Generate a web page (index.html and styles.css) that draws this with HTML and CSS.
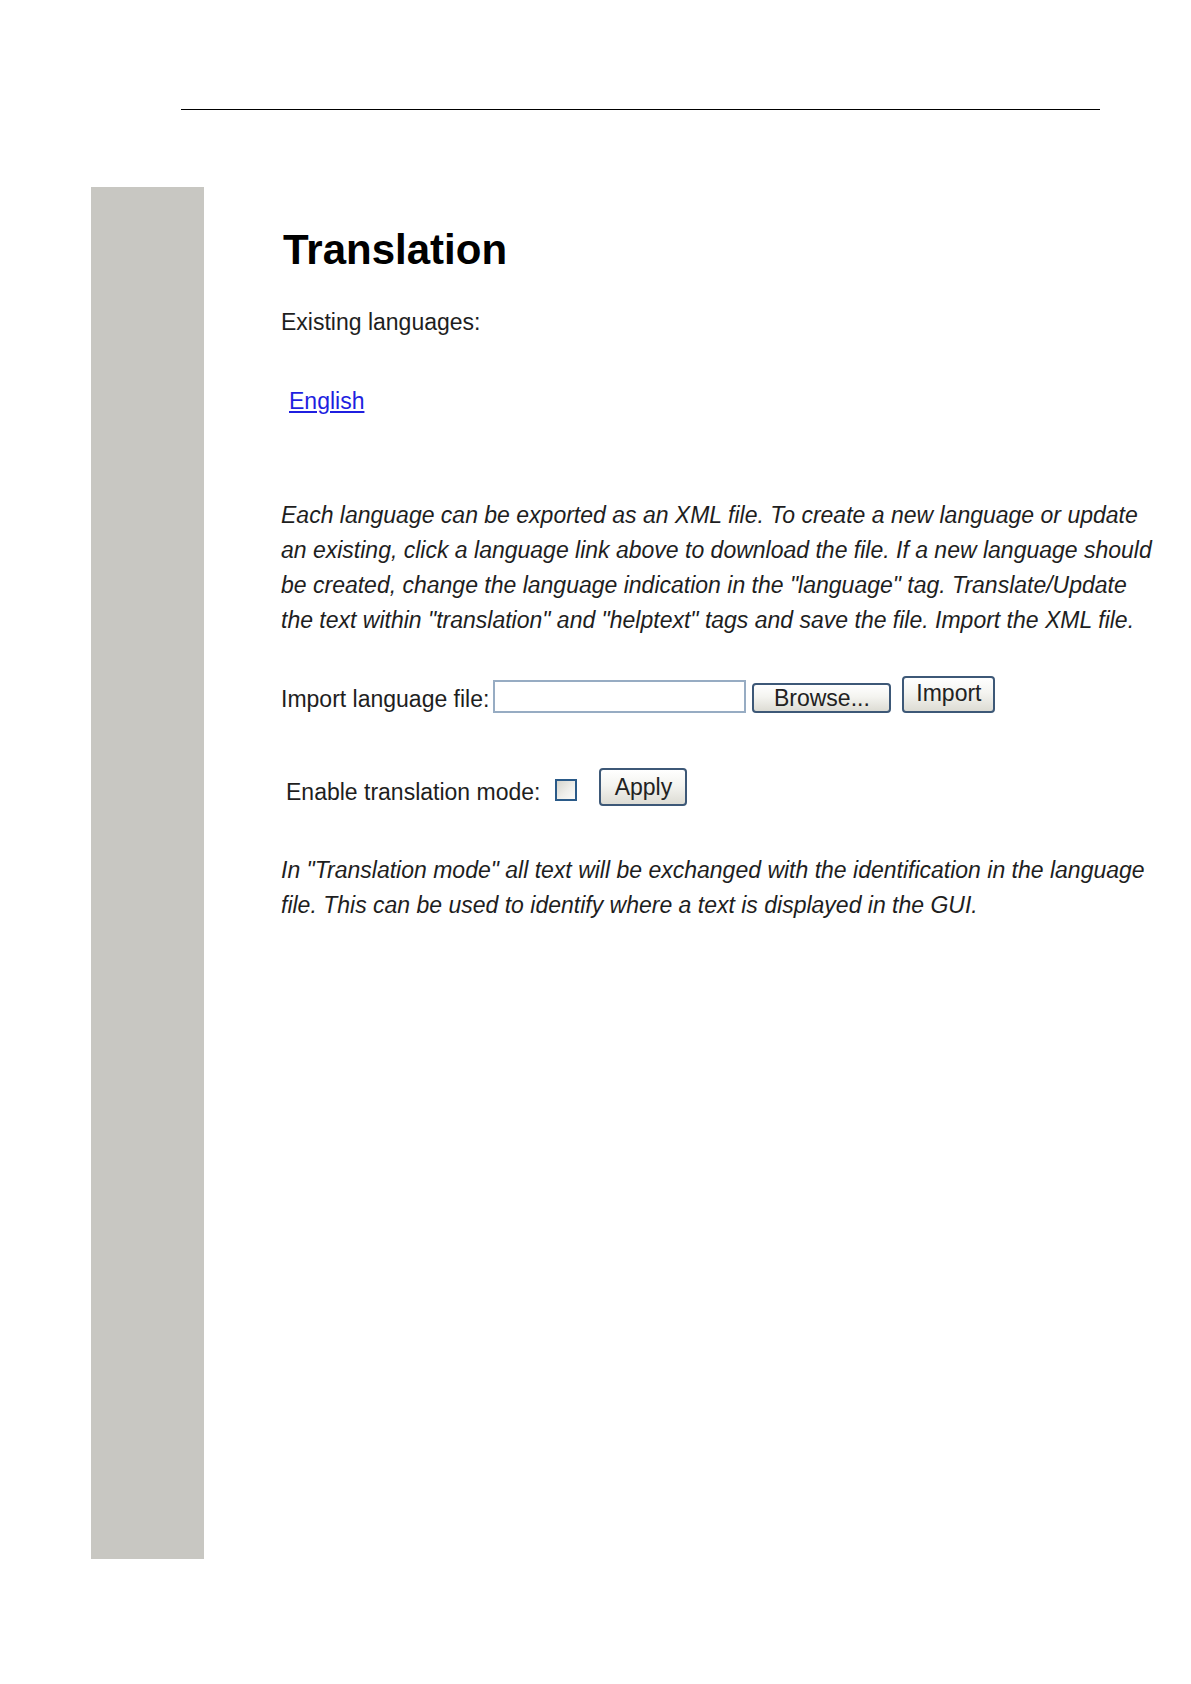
FILE: index.html
```html
<!DOCTYPE html>
<html lang="en">
<head>
<meta charset="utf-8">
<title>Translation</title>
<link rel="stylesheet" href="styles.css">
</head>
<body>
<div class="page">
  <div class="rule"></div>
  <div class="layout">
    <aside class="sidebar"></aside>
    <main class="content">
      <h1 class="title">Translation</h1>
      <p class="existing">Existing languages:</p>
      <a class="lang-link" href="#">English</a>
      <p class="note note-first">Each language can be exported as an XML file. To create a new language or update an existing, click a language link above to download the file. If a new language should be created, change the language indication in the "language" tag. Translate/Update the text within "translation" and "helptext" tags and save the file. Import the XML file.</p>
      <div class="import-row">
        <span class="row-label">Import language file:</span>
        <input class="file-field" type="text" value="">
        <button class="btn btn-browse" type="button">Browse...</button>
        <button class="btn btn-import" type="button">Import</button>
      </div>
      <div class="mode-row">
        <span class="row-label">Enable translation mode:</span>
        <input class="check" type="checkbox">
        <button class="btn btn-apply" type="button">Apply</button>
      </div>
      <p class="note note-second">In "Translation mode" all text will be exchanged with the identification in the language file. This can be used to identify where a text is displayed in the GUI.</p>
    </main>
  </div>
</div>
</body>
</html>
```
FILE: styles.css
```css
html, body {
  margin: 0;
  padding: 0;
  background: #ffffff;
}

body {
  font-family: "Liberation Sans", Arial, sans-serif;
  color: #1e1e1e;
}

.page {
  padding-top: 109px;
}

.rule {
  margin-left: 181px;
  width: 919px;
  height: 0;
  border-top: 1px solid #000000;
}

.layout {
  display: flex;
  margin-top: 77px;
  margin-left: 91px;
}

.sidebar {
  flex: none;
  width: 113px;
  height: 1372px;
  background: #c8c7c2;
}

.content {
  display: flex;
  flex-direction: column;
  align-items: flex-start;
  padding-left: 77px;
  padding-top: 39px;
}

.title {
  margin: 0 0 0 2px;
  font-size: 42px;
  font-weight: bold;
  line-height: 48px;
  color: #000000;
}

.existing {
  margin: 34px 0 0 0;
  font-size: 23px;
  line-height: 28px;
}

.lang-link {
  display: block;
  margin: 51px 0 0 8px;
  font-size: 23px;
  line-height: 28px;
  color: #1f1fe0;
  text-decoration: underline;
}

.note {
  margin: 0;
  width: 882px;
  font-size: 23px;
  line-height: 35px;
  font-style: italic;
}

.note-first {
  margin-top: 83px;
}

.note-second {
  margin-top: 47px;
}

.import-row,
.mode-row {
  display: flex;
  align-items: flex-end;
}

.import-row {
  margin-top: 38px;
}

.mode-row {
  margin-top: 55px;
  margin-left: 5px;
}

.row-label {
  font-size: 23px;
  line-height: 28px;
}

.file-field {
  box-sizing: border-box;
  width: 253px;
  height: 33px;
  margin: 0 0 0 4px;
  padding: 0 4px;
  border: 2px solid #97acc3;
  background: #ffffff;
  font-family: inherit;
  font-size: 20px;
}

.btn {
  box-sizing: border-box;
  margin: 0;
  padding: 0;
  border: 2px solid #3d5877;
  border-radius: 4px;
  background: linear-gradient(#ffffff 0%, #f4f4f0 45%, #dddcd4 100%);
  font-family: inherit;
  font-size: 23px;
  line-height: 26px;
  color: #222222;
}

.btn-browse {
  width: 139px;
  height: 30px;
  margin-left: 6px;
}

.btn-import {
  width: 93px;
  height: 37px;
  margin-left: 11px;
  padding-bottom: 3px;
}

.btn-apply {
  width: 88px;
  height: 38px;
  margin-left: 22px;
  padding-bottom: 1px;
}

.check {
  appearance: none;
  -webkit-appearance: none;
  box-sizing: border-box;
  width: 22px;
  height: 22px;
  margin: 0 0 5px 15px;
  border: 2px solid #2a5a88;
  background: linear-gradient(135deg, #d6d5cd 0%, #eeeeea 55%, #fbfbf9 100%);
}
```
